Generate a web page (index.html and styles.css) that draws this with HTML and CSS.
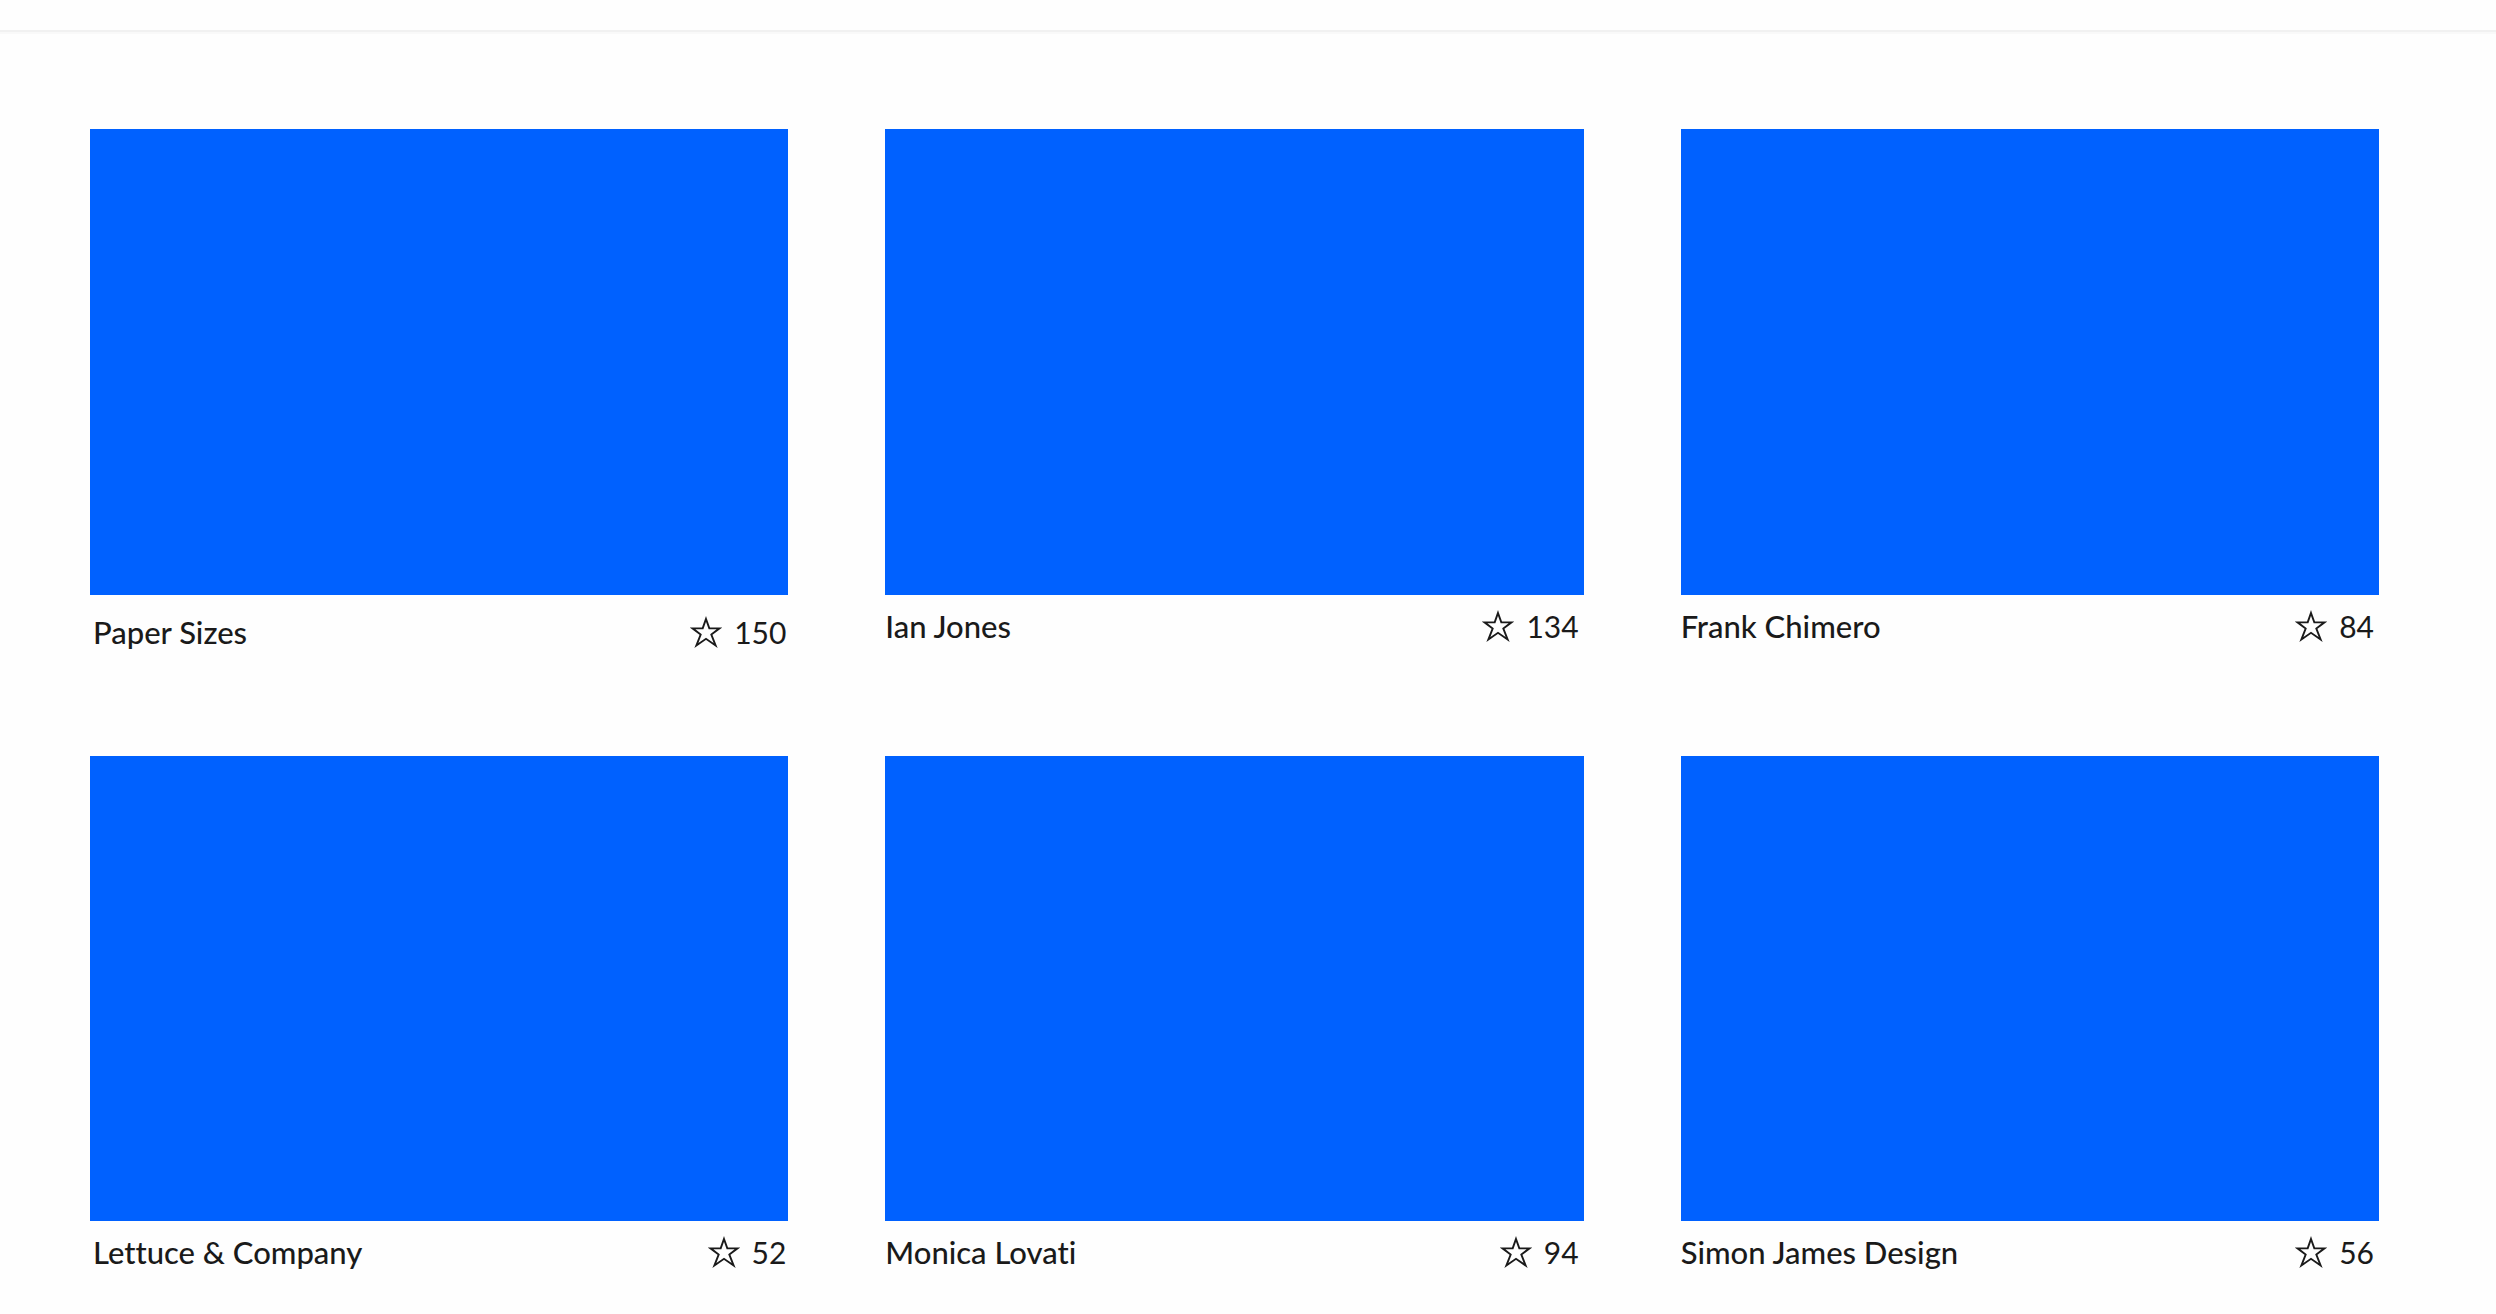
FILE: index.html
```html
<!DOCTYPE html>
<html lang="en">
<head>
<meta charset="utf-8">
<title>Gallery</title>
<link rel="stylesheet" href="styles.css">
</head>
<body>
<svg class="sprite" aria-hidden="true"><symbol id="star" viewBox="0 0 30 30"><path d="M15 2.8 L18.1 11.6 H27.6 L20 17.4 L24 27.6 L15 21.4 L6 27.6 L10 17.4 L2.4 11.6 H11.9 Z" fill="none" stroke="currentColor" stroke-width="1.8"/></symbol></svg>
<header class="topbar"></header>
<main class="gallery">
  <article class="card card-inset card-lead">
    <div class="thumb"></div>
    <div class="caption"><h2 class="title">Paper Sizes</h2><button class="likes" type="button"><svg class="star"><use href="#star"/></svg>150</button></div>
  </article>
  <article class="card">
    <div class="thumb"></div>
    <div class="caption"><h2 class="title">Ian Jones</h2><button class="likes" type="button"><svg class="star"><use href="#star"/></svg>134</button></div>
  </article>
  <article class="card">
    <div class="thumb"></div>
    <div class="caption"><h2 class="title">Frank Chimero</h2><button class="likes" type="button"><svg class="star"><use href="#star"/></svg>84</button></div>
  </article>
  <article class="card card-inset">
    <div class="thumb"></div>
    <div class="caption"><h2 class="title">Lettuce &amp; Company</h2><button class="likes" type="button"><svg class="star"><use href="#star"/></svg>52</button></div>
  </article>
  <article class="card">
    <div class="thumb"></div>
    <div class="caption"><h2 class="title">Monica Lovati</h2><button class="likes" type="button"><svg class="star"><use href="#star"/></svg>94</button></div>
  </article>
  <article class="card">
    <div class="thumb"></div>
    <div class="caption"><h2 class="title">Simon James Design</h2><button class="likes" type="button"><svg class="star"><use href="#star"/></svg>56</button></div>
  </article>
</main>
</body>
</html>
```
FILE: styles.css
```css
* { box-sizing: border-box; }

body {
  margin: 0;
  background: #fefefe;
  color: #1a1a1a;
  font-family: Lato, "Open Sans", sans-serif;
  font-size: 30px;
  line-height: 36px;
  font-variant-ligatures: none;
}

.sprite {
  position: absolute;
  width: 0;
  height: 0;
}

.topbar {
  height: 32px;
  border-bottom: 2px solid #f1f1f1;
  box-shadow: 0 2px #f9f9f9;
}

.gallery {
  display: grid;
  grid-template-columns: repeat(3, 1fr);
  gap: 112px 97px;
  padding: 97px 117px 30px 90px;
}

.thumb {
  aspect-ratio: 3 / 2;
  background: #0061ff;
}

.caption {
  display: flex;
  justify-content: space-between;
  align-items: center;
  padding: 13px 5px 0 0;
}

.card-inset .caption {
  padding-left: 3px;
  padding-right: 2px;
}

.card-lead .caption {
  padding-top: 19px;
  margin-bottom: -6px;
}

.title {
  margin: 0;
  font-size: 31px;
  font-weight: 500;
}

.likes {
  display: flex;
  align-items: center;
  gap: 12px;
  padding: 0;
  border: 0;
  background: none;
  color: inherit;
  font: inherit;
  cursor: pointer;
}

.star {
  width: 32px;
  height: 32px;
}
```
